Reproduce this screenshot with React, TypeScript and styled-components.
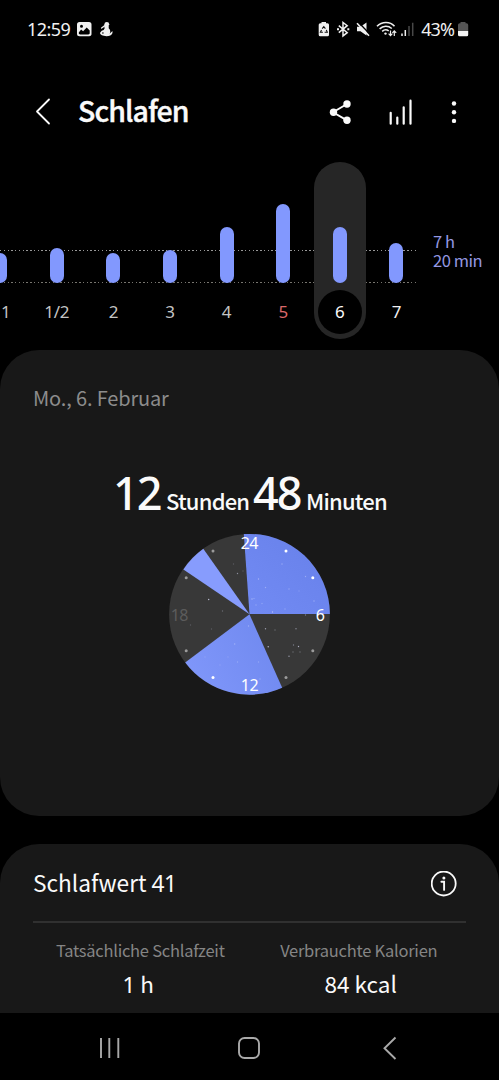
import React from "react";
import styled, { createGlobalStyle } from "styled-components";

const GlobalStyle = createGlobalStyle`
  * { box-sizing: border-box; }
  body {
    margin: 0;
    background: #000;
    overflow: hidden;
    color: #fafafa;
    font-family: "Noto Sans CJK JP", "Noto Sans", sans-serif;
  }
`;

const digits = `font-family: "Noto Sans", "Open Sans", sans-serif;`;

const Screen = styled.main`
  width: 499px;
  height: 1080px;
  display: flex;
  flex-direction: column;
  overflow: hidden;
  background: #000;
`;

const StatusBar = styled.div`
  height: 60px;
  flex: none;
  padding: 0 30px 2px 27px;
  display: flex;
  align-items: center;
  justify-content: space-between;
`;

const StatusGroup = styled.div`
  display: flex;
  align-items: center;
  gap: 3px;
`;

const StatusText = styled.span<{ $spacing: number }>`
  ${digits}
  font-size: 18px;
  line-height: 20px;
  letter-spacing: ${(p) => p.$spacing}px;
  color: #f0f0f0;
  white-space: nowrap;
`;

const Header = styled.header`
  height: 102px;
  flex: none;
  padding: 1px 0 0;
  display: flex;
  align-items: center;
`;

const Title = styled.h1`
  width: 250px;
  margin: -4px 0 0;
  font-size: 28.5px;
  line-height: 40px;
  font-weight: 500;
  letter-spacing: -0.95px;
  -webkit-text-stroke: 0.4px #fafafa;
`;

const BackIcon = styled.svg`
  flex: none;
  margin: 0 27px 0 35px;
`;

const ActionIcons = styled.svg`
  flex: none;
`;

const Chart = styled.section`
  height: 188px;
  flex: none;
  display: flex;
`;

const Plot = styled.div`
  width: 425px;
  height: 177px;
  flex: none;
  display: flex;
  overflow: hidden;
  background-image: repeating-linear-gradient(90deg, #989898 0 1.4px, transparent 1.4px 3.77px),
    repeating-linear-gradient(90deg, #77756f 0 1.4px, transparent 1.4px 3.77px);
  background-size: 417px 1.3px, 417px 1.3px;
  background-position: 0 88px, 0 120px;
  background-repeat: no-repeat;
`;

const Day = styled.div<{ $first?: boolean }>`
  width: 56.6px;
  height: 177px;
  flex: none;
  margin-left: ${(p) => (p.$first ? "-28.1px" : "0")};
  display: flex;
  justify-content: center;
`;

const DayTrack = styled.div<{ $active?: boolean }>`
  width: 51.5px;
  height: 177px;
  border-radius: 26px;
  background: ${(p) => (p.$active ? "#262626" : "transparent")};
  display: flex;
  flex-direction: column;
  align-items: center;
`;

const BarArea = styled.div`
  height: 121px;
  display: flex;
  align-items: flex-end;
`;

const Bar = styled.div<{ $height: number }>`
  width: 14px;
  height: ${(p) => p.$height}px;
  border-radius: 7px;
  background: #8298fe;
`;

const DayLabel = styled.div<{ $active?: boolean; $color: string; $shift?: number }>`
  ${digits}
  width: 44px;
  height: 44px;
  margin-top: 7px;
  padding-left: ${(p) => p.$shift || 0}px;
  border-radius: 50%;
  background: ${(p) => (p.$active ? "#000" : "transparent")};
  color: ${(p) => p.$color};
  font-size: 17px;
  line-height: 44px;
  letter-spacing: -0.3px;
  text-align: center;
`;

const Goal = styled.div`
  padding: 69.5px 0 0 8px;
  color: #9498e2;
  font-size: 16.5px;
  line-height: 19.5px;
  letter-spacing: -0.45px;
  white-space: nowrap;
`;

const Card = styled.section<{ $height: number; $open?: boolean }>`
  height: ${(p) => p.$height}px;
  flex: none;
  background: #181818;
  border-radius: ${(p) => (p.$open ? "39px 39px 0 0" : "39px")};
  display: flex;
  flex-direction: column;
`;

const DateText = styled.div`
  margin: 33px 0 0 33px;
  font-size: 20px;
  line-height: 30px;
  letter-spacing: -0.15px;
  color: #8c8c8c;
`;

const Duration = styled.div`
  margin-top: 50px;
  height: 60px;
  display: flex;
  align-items: baseline;
  padding-left: 113px;
  line-height: 60px;
`;

const Big = styled.span`
  ${digits}
  width: 53px;
  font-size: 45px;
  font-weight: 500;
  letter-spacing: -2px;
  white-space: nowrap;
`;

const Unit = styled.span<{ $width: number }>`
  width: ${(p) => p.$width}px;
  font-size: 22px;
  font-weight: 500;
  letter-spacing: -0.8px;
  white-space: nowrap;
`;

const Dial = styled.svg`
  width: 161px;
  height: 161px;
  margin: 11px auto 0 169px;
  overflow: visible;
`;

const DialLabel = styled.text`
  ${digits}
  font-size: 16px;
  letter-spacing: -0.5px;
  text-anchor: middle;
`;

const Gap = styled.div`
  height: 28px;
  flex: none;
`;

const ScoreRow = styled.div`
  height: 79px;
  margin: 0 33px;
  padding: 2px 9px 0 0;
  border-bottom: 2px solid #303030;
  display: flex;
  align-items: center;
  justify-content: space-between;
`;

const ScoreTitle = styled.div`
  font-size: 22.7px;
  line-height: 32px;
`;

const Metrics = styled.div`
  display: flex;
  margin: 0 31px;
  padding-top: 15px;
`;

const Metric = styled.div`
  flex: 1;
  text-align: center;
`;

const MetricName = styled.div`
  font-size: 16.5px;
  line-height: 24px;
  letter-spacing: -0.25px;
  color: #858585;
  white-space: nowrap;
`;

const MetricValue = styled.div<{ $shift: number }>`
  margin: 5px ${(p) => -p.$shift}px 0 ${(p) => p.$shift}px;
  font-size: 22.5px;
  line-height: 32px;
`;

const Digits = styled.span<{ $spacing?: number }>`
  ${digits}
  letter-spacing: ${(p) => p.$spacing || 0}px;
`;

const NavBar = styled.nav`
  height: 67px;
  flex: none;
  padding: 3px 98.5px 0 97px;
  display: flex;
  align-items: center;
  justify-content: space-between;
`;

const days = [
  { label: "1", height: 30.5, color: "#c4c4c4", shift: 11 },
  { label: "1/2", height: 35.5, color: "#c4c4c4" },
  { label: "2", height: 30.5, color: "#c4c4c4" },
  { label: "3", height: 33.5, color: "#c4c4c4" },
  { label: "4", height: 56, color: "#c4c4c4" },
  { label: "5", height: 79.5, color: "#d9686a" },
  { label: "6", height: 56, color: "#fafafa", active: true },
  { label: "7", height: 40.5, color: "#f0f0f0" },
];

const hourDots: [number, number, boolean][] = [
  [286, 551, true],
  [312.8, 577.8, true],
  [312.8, 650.7, false],
  [286, 677.5, false],
  [213, 677.5, true],
  [186.2, 650.7, false],
  [186.2, 577.8, false],
  [213, 551, false],
];

const stars: [number, number, number][] = [
  [282, 564, 0.4], [258.5, 579, 0.5], [265.5, 587.5, 0.4], [289, 589, 0.35],
  [305.5, 576.5, 0.4], [314, 601, 0.4], [272.5, 612, 0.6], [252, 599, 0.5],
  [254, 598.5, 0.3], [262, 603.5, 0.3], [285, 609, 0.3], [299, 591, 0.2],
  [237.5, 573.5, 0.5], [233.5, 564, 0.2], [243, 571, 0.2], [208.7, 599.5, 0.8],
  [222.5, 611, 0.3], [190.5, 625, 0.2], [211.5, 629, 0.2], [248.5, 626, 0.4],
  [265.5, 628.7, 0.6], [296, 628.8, 0.5], [275, 630, 0.3], [268.2, 646.7, 0.8],
  [298.5, 646.5, 0.7], [293.5, 645, 0.4], [289, 656.3, 0.6], [300, 652, 0.3],
  [293, 652, 0.3], [234.7, 644, 0.4], [237.5, 662, 0.3], [258.5, 662, 0.3],
  [228, 657, 0.2], [220, 665, 0.2], [205, 657, 0.2], [305.5, 615, 0.4],
  [256, 605, 0.3], [260, 679, 0.3],
];

function StatusIconsLeft() {
  return (
    <svg width="42" height="20" viewBox="74 19 42 20">
      <path
        fillRule="evenodd"
        fill="#f0f0f0"
        d="M80.5 22H90a2.5 2.5 0 0 1 2.5 2.5v9A2.5 2.5 0 0 1 90 36.200h-9.500a2.500 2.500 0 0 1-2.500-2.500v-9.200A2.500 2.500 0 0 1 80.500 22ZM82.500 24.700a1.500 1.500 0 1 0 0 3 1.500 1.500 0 0 0 0-3ZM79.800 32.600v.4c0 1 .5 1.400 1.400 1.400h8.100c.9 0 1.400-.4 1.400-1.400v-2.600l-3-2.900-3.600 3.700-2-1.800Z"
      />
      <g fill="#f0f0f0">
        <circle cx="107.800" cy="24.300" r="2.400" />
        <path d="M105.300 26h4.400v2.200c1.900 1.500 1.900 3.800.9 5.500l2.800-2.700.1 2c-.8 2.200-3.100 3.200-6 3.200-3.700 0-6.300-1.300-6.600-3.100l1.800-2.300 2-.7.900-1.600Z" />
        <path d="M102.600 28l3.600-2.600" stroke="#f0f0f0" strokeWidth="1.300" strokeLinecap="round" />
      </g>
      <circle cx="103.900" cy="33" r=".8" fill="#000" />
    </svg>
  );
}

function StatusIconsRight() {
  return (
    <svg width="101" height="20" viewBox="317 19 101 20">
      <g fill="none" stroke="#f0f0f0" strokeWidth="1.400">
        <path
          fill="#f0f0f0"
          stroke="none"
          d="M321.500 22h4.500v1.300h1.500a1.500 1.500 0 0 1 1.500 1.500v10a1.500 1.500 0 0 1-1.500 1.500h-7.300a1.500 1.500 0 0 1-1.500-1.500v-10a1.500 1.500 0 0 1 1.500-1.500h1.300Z"
        />
        <path
          d="M322.200 28.700l1.600-2 1.600 2M326.300 29.900l1 2.400h-2.700M322.900 32.300h-2.500l1.100-2.400"
          stroke="#111"
          strokeWidth="1.100"
        />
        <path d="M338.800 25.700l8.400 7-4.200 3.200V22.500l4.200 3.200-8.400 7" strokeWidth="1.500" />
        <path d="M337 29.300h2M347.300 29.300h2" strokeWidth="1.900" />
        <path
          d="M357 26.700h3.500l6-4.300v13.200l-6-4.300H357Z"
          fill="#f0f0f0"
          stroke="none"
        />
        <path d="M358.400 22.200l12 12.500" stroke="#000" strokeWidth="1.400" />
        <path d="M357 23.200l12 12.500" strokeWidth="1.600" />
        <path d="M377 26.200c5-5 13-5 17.500 0M379.600 28.900c3.600-3.500 8.600-3.500 12.200-.4M382.200 31.400c2-1.900 4.500-2 6.500-.6" strokeWidth="1.600" />
        <circle cx="385.500" cy="33.600" r="1.200" fill="#f0f0f0" stroke="none" />
        <path d="M390.500 30.500v5M388.600 33.700l1.900 2 1.900-2M394.300 36v-5M392.400 32.800l1.900-2 1.900 2" strokeWidth="1.200" />
        <path d="M402 36v-2.500M405.300 36v-6" strokeWidth="1.500" />
        <path d="M409 36V26M412.700 36V22.700" stroke="#484848" strokeWidth="1.500" />
      </g>
    </svg>
  );
}

function Battery() {
  return (
    <svg width="12" height="20" viewBox="457 19 12 20">
      <path
        fill="#555"
        d="M460.500 22h5v1.200h1a1.700 1.700 0 0 1 1.700 1.700V31h-10.200v-6.100a1.700 1.700 0 0 1 1.700-1.700h.8Z"
      />
      <path fill="#f4f4f4" d="M458 31h10.200v3.700a1.500 1.500 0 0 1-1.500 1.500h-7.200a1.500 1.500 0 0 1-1.500-1.500Z" />
    </svg>
  );
}

function SleepDial() {
  return (
    <Dial viewBox="169 534 161 161">
      <defs>
        <linearGradient id="night" x1="0" y1="1" x2="1" y2="0">
          <stop offset="0" stopColor="#728bf4" />
          <stop offset="1" stopColor="#6780e9" />
        </linearGradient>
        <linearGradient id="noon" x1="0" y1="1" x2="1" y2="0.600">
          <stop offset="0" stopColor="#8198fb" />
          <stop offset="1" stopColor="#718af0" />
        </linearGradient>
      </defs>
      <circle cx="249.500" cy="614.300" r="80.400" fill="#383838" />
      <path d="M249.500 614L243.800 534.100A80.400 80.400 0 0 1 329.900 614Z" fill="url(#night)" />
      <path d="M249.500 614.300L282.200 687.700A80.400 80.400 0 0 1 185.200 662.500Z" fill="url(#noon)" />
      <path d="M249.500 614.300L183.400 569.400A80.400 80.400 0 0 1 203.300 548.800Z" fill="#879cfd" />
      {hourDots.map(([x, y, lit], i) => (
        <circle key={i} cx={x} cy={y} r="1.500" fill={lit ? "#fff" : "#9b9b9b"} />
      ))}
      {stars.map(([x, y, o], i) => (
        <circle key={i} cx={x} cy={y} r="0.700" fill="#dfe3ff" opacity={o} />
      ))}
      <DialLabel x="249.300" y="549.300" fill="#fff">24</DialLabel>
      <DialLabel x="320" y="620.500" fill="#fff">6</DialLabel>
      <DialLabel x="249.500" y="691" fill="#fff">12</DialLabel>
      <DialLabel x="179.300" y="620.500" fill="#5c5c5c">18</DialLabel>
    </Dial>
  );
}

export default function App() {
  return (
    <Screen>
      <GlobalStyle />
      <StatusBar>
        <StatusGroup>
          <StatusText $spacing={-0.55}>12:59</StatusText>
          <StatusIconsLeft />
        </StatusGroup>
        <StatusGroup>
          <StatusIconsRight />
          <StatusText $spacing={-0.9}>43%</StatusText>
          <Battery />
        </StatusGroup>
      </StatusBar>
      <Header>
        <BackIcon width="16" height="27" viewBox="0 0 16 27">
          <path
            d="M14 1.500L2 13.500l12 12"
            fill="none"
            stroke="#fafafa"
            strokeWidth="1.800"
            strokeLinecap="round"
            strokeLinejoin="round"
          />
        </BackIcon>
        <Title>Schlafen</Title>
        <ActionIcons width="136" height="28" viewBox="328 98 136 28">
          <g fill="#fafafa" stroke="#fafafa">
            <path d="M347 104l-14 8.200 14 8.200" fill="none" strokeWidth="1.900" />
            <g stroke="none">
              <circle cx="347" cy="104" r="3.700" />
              <circle cx="333.500" cy="112.200" r="3.700" />
              <circle cx="347" cy="120.300" r="3.700" />
              <circle cx="454" cy="103.500" r="2.200" />
              <circle cx="454" cy="112.200" r="2.200" />
              <circle cx="454" cy="120.900" r="2.200" />
            </g>
            <path
              d="M390.700 112.800V123.700M397.300 117.500V123.700M403.700 107.300V123.700M410.500 100.700V123.700"
              strokeWidth="2.200"
              strokeLinecap="round"
            />
          </g>
        </ActionIcons>
      </Header>
      <Chart>
        <Plot>
          {days.map((d, i) => (
            <Day key={i} $first={i === 0}>
              <DayTrack $active={d.active}>
                <BarArea>
                  <Bar $height={d.height} />
                </BarArea>
                <DayLabel $active={d.active} $color={d.color} $shift={d.shift}>
                  {d.label}
                </DayLabel>
              </DayTrack>
            </Day>
          ))}
        </Plot>
        <Goal>
          7 h
          <br />
          20 min
        </Goal>
      </Chart>
      <Card $height={466}>
        <DateText>Mo., 6. Februar</DateText>
        <Duration>
          <Big>12</Big>
          <Unit $width={87}>Stunden</Unit>
          <Big>48</Big>
          <Unit $width={84}>Minuten</Unit>
        </Duration>
        <SleepDial />
      </Card>
      <Gap />
      <Card $height={169} $open>
        <ScoreRow>
          <ScoreTitle>
            Schlafwert <Digits $spacing={-0.6}>41</Digits>
          </ScoreTitle>
          <svg width="26" height="26" viewBox="0 0 26 26">
            <circle cx="12.700" cy="12.500" r="12" fill="none" stroke="#fafafa" strokeWidth="1.800" />
            <circle cx="12.900" cy="7.100" r="1.500" fill="#fafafa" />
            <path d="M10.400 10.700h2.700v8.200" fill="none" stroke="#fafafa" strokeWidth="1.900" strokeLinecap="round" />
          </svg>
        </ScoreRow>
        <Metrics>
          <Metric>
            <MetricName>Tatsächliche Schlafzeit</MetricName>
            <MetricValue $shift={-2}>
              <Digits>1</Digits> h
            </MetricValue>
          </Metric>
          <Metric>
            <MetricName>Verbrauchte Kalorien</MetricName>
            <MetricValue $shift={2}>84 kcal</MetricValue>
          </Metric>
        </Metrics>
      </Card>
      <NavBar>
        <svg width="24" height="24" viewBox="0 0 24 24">
          <path d="M4 2v20M12.300 2v20M21.300 2v20" stroke="#a9a9a9" strokeWidth="1.900" />
        </svg>
        <svg width="24" height="24" viewBox="0 0 24 24">
          <rect x="2" y="2" width="20" height="20" rx="5.500" fill="none" stroke="#a9a9a9" strokeWidth="1.900" />
        </svg>
        <svg width="24" height="24" viewBox="0 0 24 24">
          <path d="M18.500 1.500L7.500 12.300l11 10.700" fill="none" stroke="#a9a9a9" strokeWidth="1.900" />
        </svg>
      </NavBar>
    </Screen>
  );
}
